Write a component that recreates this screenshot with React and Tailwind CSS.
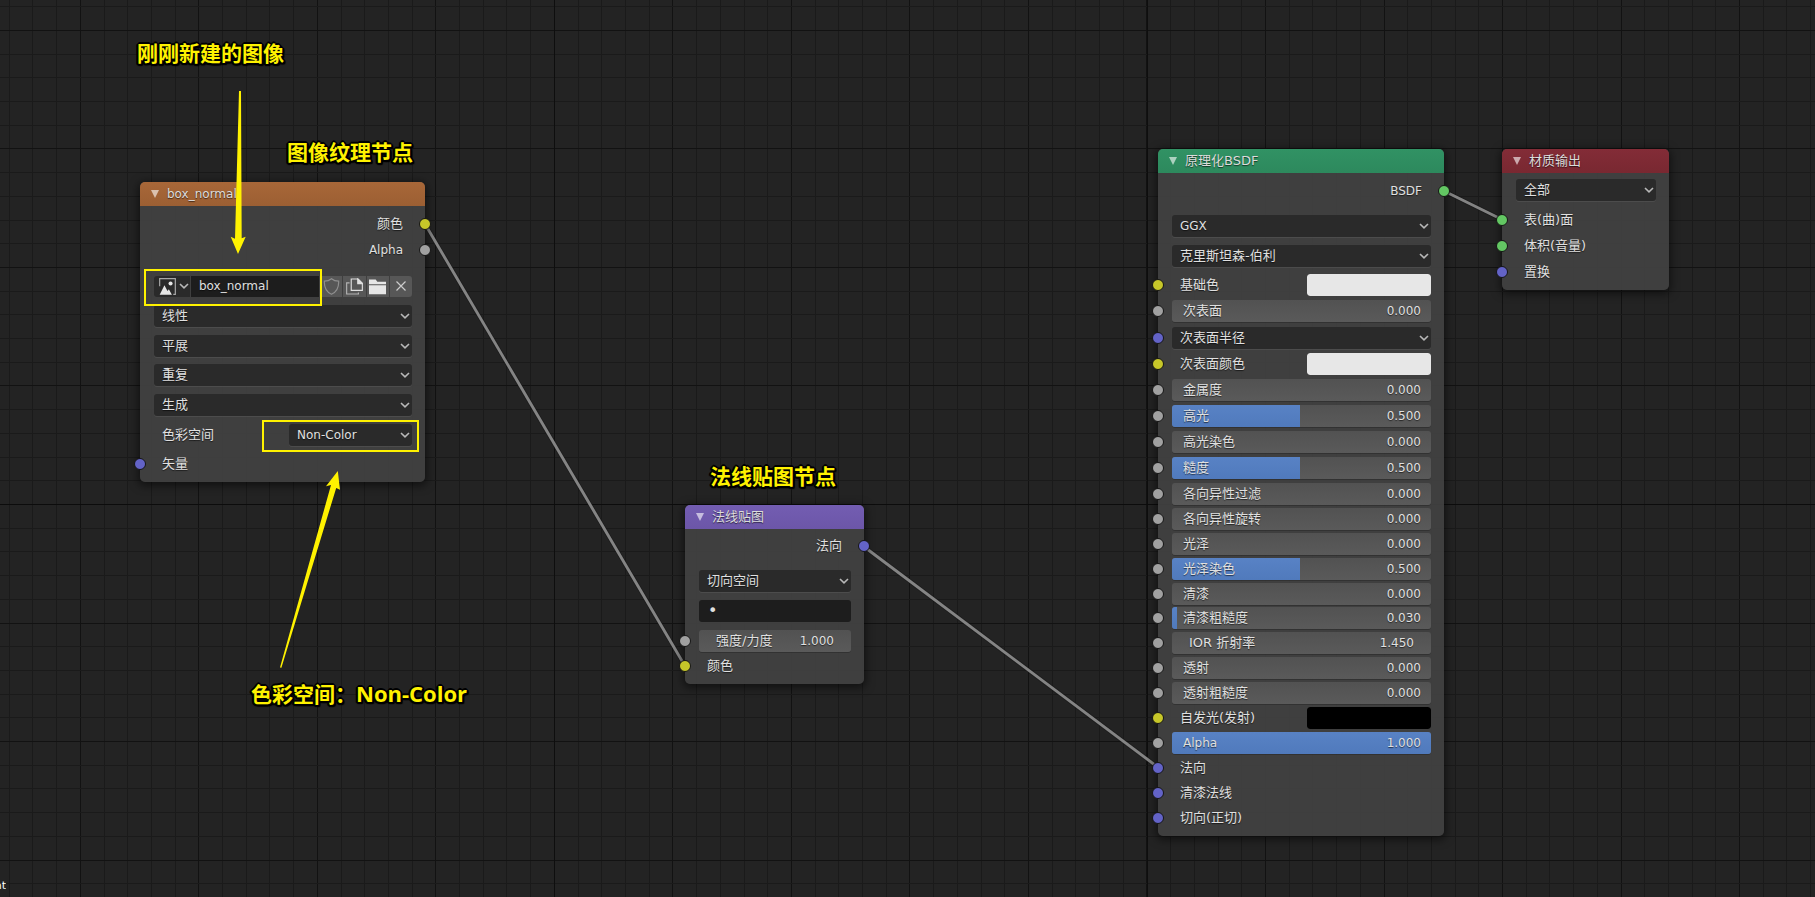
import React from "react";

const GRID_STEP = 118.52;
const GRID_X = 80.3;
const GRID_Y = 30.4;

function gridLines(origin, count) {
  const lines = [];
  for (let i = -5; i < count; i += 1) {
    const at = Math.floor(origin + (GRID_STEP / 5) * i);
    const major = i % 5 === 0;
    lines.push({ at, color: major ? "#121212" : "#1a1a1a", order: major ? 1 : 0 });
  }
  return lines.sort((a, b) => a.order - b.order);
}

function Grid() {
  return (
    <svg className="absolute inset-0 h-full w-full" shapeRendering="crispEdges" aria-hidden="true">
      {gridLines(GRID_X, 160).map((l) => (
        <rect key={"x" + l.at} x={l.at} y="0" width="1" height="100%" fill={l.color} />
      ))}
      {gridLines(GRID_Y, 100).map((l) => (
        <rect key={"y" + l.at} x="0" y={l.at} width="100%" height="1" fill={l.color} />
      ))}
      <rect x="554" y="0" width="1" height="100%" fill="#0e0e0e" />
      <rect x="1147" y="0" width="1" height="100%" fill="#0e0e0e" />
      <rect x="0" y="504" width="100%" height="1" fill="#0c0c0c" />
    </svg>
  );
}

const LINKS = [
  [425, 224, 685, 666],
  [863, 546, 1159, 768],
  [1444, 191, 1503, 220],
];

function Links() {
  return (
    <svg className="absolute inset-0 h-full w-full" aria-hidden="true">
      {LINKS.map(([x1, y1, x2, y2]) => (
        <g key={x1}>
          <line x1={x1} y1={y1} x2={x2} y2={y2} stroke="#141414" strokeOpacity="0.5" strokeWidth="4.4" />
          <line x1={x1} y1={y1} x2={x2} y2={y2} stroke="#848484" strokeWidth="2.9" />
        </g>
      ))}
    </svg>
  );
}

const SOCKET = {
  yellow: "bg-[#c7c729]",
  gray: "bg-[#a1a1a1]",
  blue: "bg-[#6363c7]",
  green: "bg-[#63c763]",
};

function Socket({ color, side }) {
  const place = side === "out" ? "-right-[6px]" : "-left-[6px]";
  return (
    <span
      className={`absolute top-[5px] h-3 w-3 rounded-full border border-[#151515] ${place} ${SOCKET[color]}`}
    />
  );
}

function Row({ socket, side = "in", children, className = "" }) {
  return (
    <div className={`relative flex h-[22px] items-center pr-[13px] pl-[14px] ${className}`}>
      {socket && <Socket color={socket} side={side} />}
      {children}
    </div>
  );
}

function Out({ socket, latin, children }) {
  return (
    <Row socket={socket} side="out" className={`justify-end ${latin ? "text-[12px]" : ""}`}>
      <span className="pr-[9px]">{children}</span>
    </Row>
  );
}

function In({ socket, children }) {
  return (
    <Row socket={socket}>
      <span className="pl-2">{children}</span>
    </Row>
  );
}

function Chevron() {
  return (
    <svg viewBox="0 0 10 6" className="h-[6px] w-[10px]" fill="none" stroke="#b8b8b8" strokeWidth="1.6" aria-hidden="true">
      <path d="M1 1 L5 4.8 L9 1" />
    </svg>
  );
}

function Select({ value, label, latin }) {
  return (
    <div className="relative min-w-0 flex-1">
      <select
        aria-label={label || value}
        className={`block h-[22px] w-full appearance-none rounded-[3px] bg-[#2a2a2a] pr-4 pl-2 text-[#e0e0e0] shadow-[0_1px_0_rgba(255,255,255,0.07)] outline-none [text-shadow:0_1px_1px_rgba(0,0,0,0.6)] ${latin ? "text-[12px]" : "text-[13px]"}`}
      >
        <option>{value}</option>
      </select>
      <span className="pointer-events-none absolute top-[8px] right-[2px] flex">
        <Chevron />
      </span>
    </div>
  );
}

function Slider({ label, value, fill = 0, socket = "gray", latin }) {
  return (
    <Row socket={socket}>
      <label className="relative flex h-[22px] flex-1 items-center justify-between overflow-hidden rounded-[3px] bg-gradient-to-b from-[#525252] to-[#5a5a5a] pr-[10px] pl-[11px] shadow-[0_1px_0_rgba(0,0,0,0.2)]">
        <span
          className="absolute inset-y-0 left-0 bg-gradient-to-b from-[#5882c5] to-[#507abc]"
          style={{ width: `${fill}%` }}
        />
        <span className={`relative ${latin ? "text-[12px]" : ""}`}>{label}</span>
        <span className="relative text-[12px]">{value}</span>
        <input
          type="range"
          min="0"
          max="1"
          step="0.001"
          defaultValue={value}
          className="absolute inset-0 h-full w-full opacity-0"
        />
      </label>
    </Row>
  );
}

function NumberField({ id, label, value, socket = "gray" }) {
  return (
    <Row socket={socket}>
      <div className="flex h-[22px] flex-1 items-center justify-between rounded-[3px] bg-gradient-to-b from-[#525252] to-[#5a5a5a] px-[17px] shadow-[0_1px_0_rgba(0,0,0,0.2)]">
        <label htmlFor={id}>{label}</label>
        <input
          id={id}
          defaultValue={value}
          className="w-12 bg-transparent text-right text-[12px] outline-none [text-shadow:inherit]"
        />
      </div>
    </Row>
  );
}

function ColorRow({ id, label, value }) {
  return (
    <Row socket="yellow" className="justify-between">
      <label htmlFor={id} className="pl-2">
        {label}
      </label>
      <input
        id={id}
        type="color"
        defaultValue={value}
        className="h-[22px] w-[124px] appearance-none overflow-hidden rounded-[3px] bg-transparent p-0 [&::-webkit-color-swatch]:rounded-[3px] [&::-webkit-color-swatch]:border-0 [&::-webkit-color-swatch-wrapper]:p-0"
      />
    </Row>
  );
}

function Node({ title, head, className, latin, children }) {
  return (
    <section
      className={`absolute rounded-[5px] bg-[#424242]/93 pb-[7px] shadow-[0_2px_8px_2px_rgba(0,0,0,0.5)] ${className}`}
    >
      <header className={`flex h-6 items-center gap-2 rounded-t-[5px] pl-[11px] ${head}`}>
        <svg viewBox="0 0 8 8" className="h-2 w-2" aria-hidden="true">
          <path d="M0 0 H8 L4 8 Z" fill="#fff" fillOpacity="0.6" />
        </svg>
        <h2 className={`text-[#dcdcdc] ${latin ? "text-[12px]" : ""}`}>{title}</h2>
      </header>
      {children}
    </section>
  );
}

function ImageIcon() {
  return (
    <svg viewBox="0 0 50 50" className="h-[17px] w-[17px] shrink-0" aria-hidden="true">
      <path d="M2 24 V2 H48 V48 H42" fill="none" stroke="#a8a8a8" strokeWidth="3.5" />
      <path d="M2 49 L16 21 L25 38 L29 33 L38 49 Z" fill="#e6e6e6" />
      <circle cx="34" cy="16" r="6" fill="#e6e6e6" />
    </svg>
  );
}

function ShieldIcon() {
  return (
    <svg viewBox="0 0 50 50" className="h-[17px] w-[17px]" fill="none" stroke="#8f8f8f" strokeWidth="3.5" aria-hidden="true">
      <path d="M25 2 C19 7 11 9 4 9 C3 29 10 41 25 48 C40 41 47 29 46 9 C39 9 31 7 25 2 Z" />
    </svg>
  );
}

function CopyIcon() {
  return (
    <svg viewBox="0 0 52 50" className="h-[17px] w-[17px]" fill="none" stroke="#e0e0e0" strokeWidth="3.5" aria-hidden="true">
      <path d="M16 2 H37 L50 15 V37 H16 Z" />
      <path d="M36 2 V16 H50 Z" fill="#e0e0e0" />
      <path d="M11 14 H2 V48 H38 V43" stroke="#b4b4b4" />
    </svg>
  );
}

function FolderIcon() {
  return (
    <svg viewBox="0 0 51 50" className="h-[17px] w-[17px]" fill="#e6e6e6" aria-hidden="true">
      <path d="M0 4 H20 L25 11 H51 V18 H0 Z" />
      <path d="M0 21 H51 V48 H0 Z" />
    </svg>
  );
}

function CloseIcon() {
  return (
    <svg viewBox="0 0 10 10" className="h-[10px] w-[10px]" stroke="#cccccc" strokeWidth="1.2" aria-hidden="true">
      <path d="M0.5 0.5 L9.5 9.5 M9.5 0.5 L0.5 9.5" />
    </svg>
  );
}

function IconButton({ label, children }) {
  return (
    <button
      type="button"
      aria-label={label}
      className="flex h-full flex-1 items-center justify-center bg-[#575757]"
    >
      {children}
    </button>
  );
}

const NOTE_SHADOW =
  "[text-shadow:1px_0_0_#000,-1px_0_0_#000,0_1px_0_#000,0_-1px_0_#000,2px_0_0_#000,-2px_0_0_#000,0_2px_0_#000,0_-2px_0_#000,1px_1px_0_#000,-1px_-1px_0_#000,1px_-1px_0_#000,-1px_1px_0_#000,2px_1px_0_#000,-2px_1px_0_#000,1px_2px_1px_#000,-1px_2px_1px_#000,2px_2px_1px_#000]";

function Note({ className, children }) {
  return (
    <p
      className={`absolute font-['Open_Sans','Noto_Sans_CJK_SC',sans-serif] text-[21px] leading-7 font-bold whitespace-nowrap text-[#fff200] ${NOTE_SHADOW} ${className}`}
    >
      {children}
    </p>
  );
}

export default function App() {
  return (
    <main className="relative h-screen w-full overflow-hidden bg-[#232323] font-['DejaVu_Sans','Noto_Sans_CJK_SC',sans-serif] text-[13px] leading-[22px] text-[#e0e0e0]">
      <Grid />
      <Links />

      <div className="[text-shadow:0_1px_1px_rgba(0,0,0,0.6)]">
        <Node
          title="box_normal"
          latin
          head="bg-gradient-to-b from-[#a86738] to-[#9c5f33]"
          className="top-[182px] left-[140px] w-[285px]"
        >
          <div className="flex flex-col gap-1 pt-[7px]">
            <Out socket="yellow">颜色</Out>
            <Out socket="gray" latin>
              Alpha
            </Out>
          </div>
          <div className="flex flex-col gap-2 pt-[14px]">
            <Row>
              <div className="flex h-[21px] flex-1 gap-px overflow-hidden rounded-[3px]">
                <button
                  type="button"
                  aria-label="浏览图像"
                  className="flex w-9 items-center gap-[3px] bg-[#2a2a2a] pl-[5px]"
                >
                  <ImageIcon />
                  <Chevron />
                </button>
                <input
                  aria-label="图像名称"
                  defaultValue="box_normal"
                  className="h-full w-[128px] bg-[#1d1d1d] pl-2 text-[12px] outline-none [text-shadow:inherit]"
                />
                <IconButton label="伪用户">
                  <ShieldIcon />
                </IconButton>
                <IconButton label="新建图像">
                  <CopyIcon />
                </IconButton>
                <IconButton label="打开图像">
                  <FolderIcon />
                </IconButton>
                <IconButton label="断开链接">
                  <CloseIcon />
                </IconButton>
              </div>
            </Row>
            <Row>
              <Select value="线性" />
            </Row>
            <Row>
              <Select value="平展" />
            </Row>
          </div>
          <div className="flex flex-col gap-2 pt-[7px]">
            <Row>
              <Select value="重复" />
            </Row>
            <Row>
              <Select value="生成" />
            </Row>
            <Row className="justify-between">
              <span className="pl-2">色彩空间</span>
              <div className="flex w-[123px]">
                <Select value="Non-Color" label="色彩空间" latin />
              </div>
            </Row>
          </div>
          <div className="pt-[7px]">
            <In socket="blue">矢量</In>
          </div>
        </Node>

        <Node
          title="法线贴图"
          head="bg-gradient-to-b from-[#735db2] to-[#6c56a8]"
          className="top-[505px] left-[685px] w-[179px]"
        >
          <div className="pt-[6px]">
            <Out socket="blue">法向</Out>
          </div>
          <div className="flex flex-col gap-2 pt-[13px]">
            <Row>
              <Select value="切向空间" />
            </Row>
            <Row>
              <input
                aria-label="UV 贴图"
                defaultValue="•"
                className="h-[22px] w-full rounded-[3px] bg-[#1d1d1d] pl-[9px] text-[16px] outline-none"
              />
            </Row>
            <NumberField id="strength" label="强度/力度" value="1.000" />
          </div>
          <div className="pt-[3px]">
            <In socket="yellow">颜色</In>
          </div>
        </Node>

        <Node
          title="原理化BSDF"
          head="bg-gradient-to-b from-[#319264] to-[#2d895d]"
          className="top-[149px] left-[1158px] w-[286px]"
        >
          <div className="pt-[7px]">
            <Out socket="green" latin>
              BSDF
            </Out>
          </div>
          <div className="flex flex-col gap-2 pt-[13px]">
            <Row>
              <Select value="GGX" latin />
            </Row>
            <Row>
              <Select value="克里斯坦森-伯利" />
            </Row>
          </div>
          <div className="flex flex-col gap-1 pt-[7px]">
            <ColorRow id="base" label="基础色" value="#e7e7e7" />
            <Slider label="次表面" value="0.000" />
          </div>
          <div className="flex flex-col gap-1 pt-[5px]">
            <Row socket="blue">
              <Select value="次表面半径" />
            </Row>
            <ColorRow id="sss" label="次表面颜色" value="#e7e7e7" />
            <Slider label="金属度" value="0.000" />
            <Slider label="高光" value="0.500" fill={49.5} />
            <Slider label="高光染色" value="0.000" />
            <Slider label="糙度" value="0.500" fill={49.5} />
            <Slider label="各向异性过滤" value="0.000" />
          </div>
          <div className="flex flex-col gap-[3px] pt-[3px]">
            <Slider label="各向异性旋转" value="0.000" />
            <Slider label="光泽" value="0.000" />
            <Slider label="光泽染色" value="0.500" fill={49.5} />
            <Slider label="清漆" value="0.000" />
          </div>
          <div className="flex flex-col gap-[3px] pt-[2px]">
            <Slider label="清漆粗糙度" value="0.030" fill={2} />
            <NumberField id="ior" label="IOR 折射率" value="1.450" />
            <Slider label="透射" value="0.000" />
            <Slider label="透射粗糙度" value="0.000" />
            <ColorRow id="emission" label="自发光(发射)" value="#000000" />
            <Slider label="Alpha" latin value="1.000" fill={100} />
            <In socket="blue">法向</In>
            <In socket="blue">清漆法线</In>
            <In socket="blue">切向(正切)</In>
          </div>
        </Node>

        <Node
          title="材质输出"
          head="bg-gradient-to-b from-[#832c37] to-[#792831]"
          className="top-[149px] left-[1502px] w-[167px]"
        >
          <div className="pt-[6px]">
            <Row>
              <Select value="全部" />
            </Row>
          </div>
          <div className="flex flex-col gap-1 pt-2">
            <In socket="green">表(曲)面</In>
            <In socket="green">体积(音量)</In>
            <In socket="blue">置换</In>
          </div>
        </Node>
      </div>

      <Note className="top-[39px] left-[137px]">刚刚新建的图像</Note>
      <Note className="top-[138px] left-[287px]">图像纹理节点</Note>
      <Note className="top-[462px] left-[710px]">法线贴图节点</Note>
      <Note className="top-[679px] left-[251px]">
        色彩空间：<span className="text-[22px]">Non-Color</span>
      </Note>

      <div className="pointer-events-none absolute top-[269px] left-[144px] h-[37px] w-[178px] border-2 border-[#fff200]" />
      <div className="pointer-events-none absolute top-[420px] left-[262px] h-8 w-[157px] border-2 border-[#fff200]" />

      <svg className="pointer-events-none absolute inset-0 h-full w-full" fill="#fff200" aria-hidden="true">
        <path d="M239 91 H241 L241.7 238.3 L245.7 236.7 L238 254 L230.7 236.7 L235 238.7 Z" />
        <path d="M280 667.5 L331 485 L326 486.3 L337.8 471 L340 489.8 L336.2 488 L281.4 667.8 Z" />
      </svg>

      <div className="absolute bottom-0 left-0 flex w-[6px] justify-end overflow-hidden text-[11px] text-white">
        nt
      </div>
    </main>
  );
}
